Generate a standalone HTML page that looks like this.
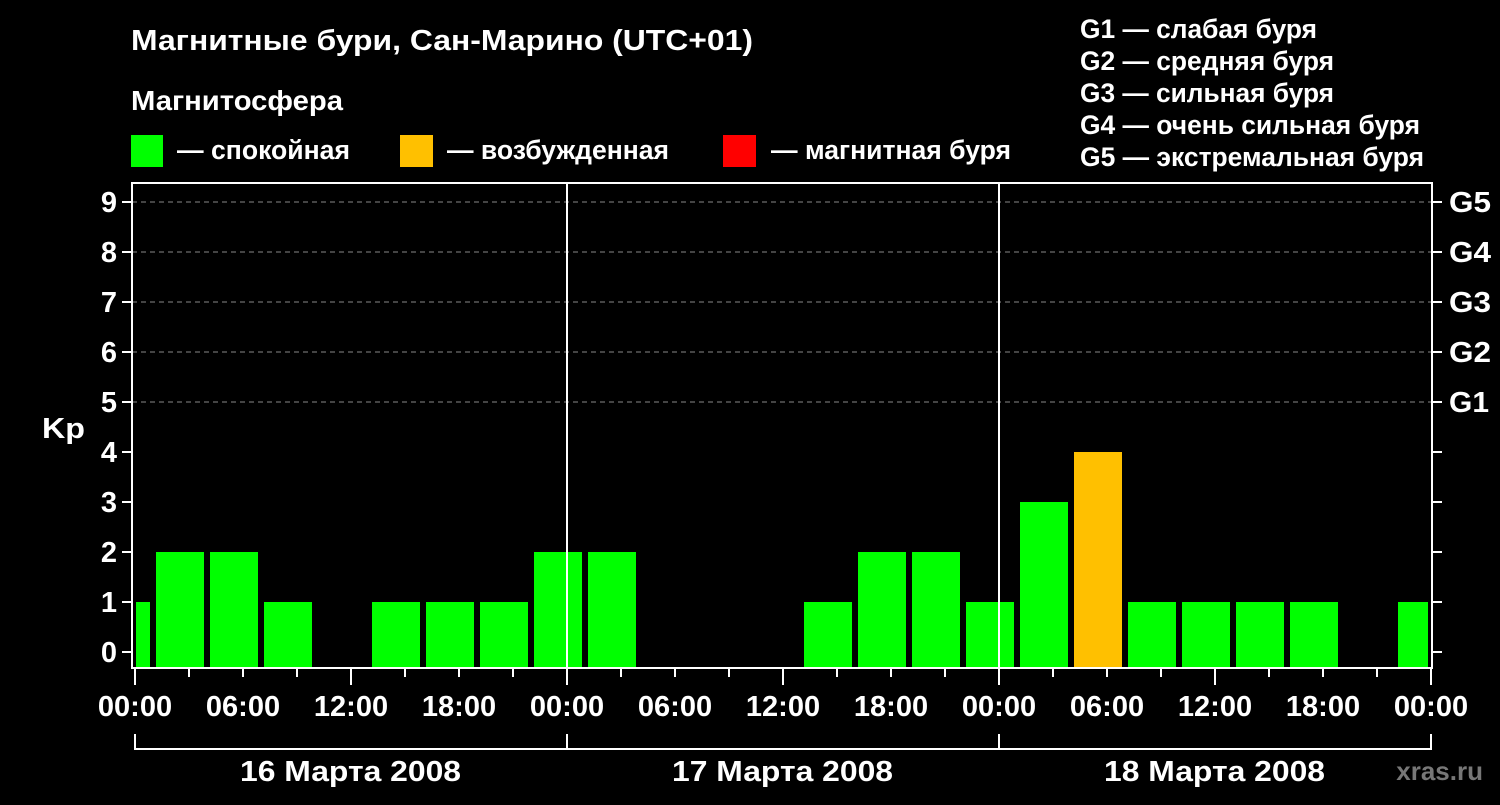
<!DOCTYPE html><html><head><meta charset="utf-8"><style>body{margin:0;background:#000;width:1500px;height:800px;overflow:hidden}</style></head><body>
<svg width="1500" height="800" xmlns="http://www.w3.org/2000/svg" font-family="Liberation Sans, sans-serif" font-weight="bold" fill="#fff">
<rect width="1500" height="800" fill="#000"/>
<text x="131" y="50" font-size="29" textLength="622" lengthAdjust="spacingAndGlyphs">Магнитные бури, Сан-Марино (UTC+01)</text>
<text x="131" y="110" font-size="28" textLength="212" lengthAdjust="spacingAndGlyphs">Магнитосфера</text>
<rect x="131" y="135" width="32" height="32" fill="#00ff00"/><text x="177" y="159" font-size="27" textLength="173" lengthAdjust="spacingAndGlyphs">— спокойная</text>
<rect x="400" y="135" width="33" height="32" fill="#ffc000"/><text x="447" y="159" font-size="27" textLength="222" lengthAdjust="spacingAndGlyphs">— возбужденная</text>
<rect x="723" y="135" width="33" height="32" fill="#ff0000"/><text x="771" y="159" font-size="27" textLength="240" lengthAdjust="spacingAndGlyphs">— магнитная буря</text>
<g font-size="27"><text x="1080" y="38" textLength="237" lengthAdjust="spacingAndGlyphs">G1 — слабая буря</text><text x="1080" y="70" textLength="254" lengthAdjust="spacingAndGlyphs">G2 — средняя буря</text><text x="1080" y="102" textLength="254" lengthAdjust="spacingAndGlyphs">G3 — сильная буря</text><text x="1080" y="134" textLength="340" lengthAdjust="spacingAndGlyphs">G4 — очень сильная буря</text><text x="1080" y="166" textLength="344" lengthAdjust="spacingAndGlyphs">G5 — экстремальная буря</text></g>
<g stroke="#888" stroke-width="1" stroke-dasharray="5,4"><line x1="132" x2="1432" y1="202" y2="202"/><line x1="132" x2="1432" y1="252" y2="252"/><line x1="132" x2="1432" y1="302" y2="302"/><line x1="132" x2="1432" y1="352" y2="352"/><line x1="132" x2="1432" y1="402" y2="402"/></g>
<g fill="#00ff00">
<rect x="136" y="602" width="14" height="66"/>
<rect x="156" y="552" width="48" height="116"/><rect x="210" y="552" width="48" height="116"/><rect x="264" y="602" width="48" height="66"/>
<rect x="372" y="602" width="48" height="66"/><rect x="426" y="602" width="48" height="66"/><rect x="480" y="602" width="48" height="66"/>
<rect x="534" y="552" width="48" height="116"/><rect x="588" y="552" width="48" height="116"/>
<rect x="804" y="602" width="48" height="66"/><rect x="858" y="552" width="48" height="116"/><rect x="912" y="552" width="48" height="116"/><rect x="966" y="602" width="48" height="66"/>
<rect x="1020" y="502" width="48" height="166"/>
<rect x="1128" y="602" width="48" height="66"/><rect x="1182" y="602" width="48" height="66"/><rect x="1236" y="602" width="48" height="66"/><rect x="1290" y="602" width="48" height="66"/>
<rect x="1398" y="602" width="30" height="66"/>
</g>
<rect x="1074" y="452" width="48" height="216" fill="#ffc000"/>
<g stroke="#fff" stroke-width="2" fill="none">
<rect x="132" y="183" width="1300" height="485"/>
<line x1="567" y1="183" x2="567" y2="668"/><line x1="999" y1="183" x2="999" y2="668"/>
<path d="M122 652H132M122 602H132M122 552H132M122 502H132M122 452H132M122 402H132M122 352H132M122 302H132M122 252H132M122 202H132"/>
<path d="M1432 652H1442M1432 602H1442M1432 552H1442M1432 502H1442M1432 452H1442M1432 402H1442M1432 352H1442M1432 302H1442M1432 252H1442M1432 202H1442"/>
<path d="M135 668V685M189 668V677M243 668V677M297 668V677M351 668V685M405 668V677M459 668V677M513 668V677M567 668V685M621 668V677M675 668V677M729 668V677M783 668V685M837 668V677M891 668V677M945 668V677M999 668V685M1053 668V677M1107 668V677M1161 668V677M1215 668V685M1269 668V677M1323 668V677M1377 668V677M1431 668V685"/>
<path d="M135 734V749H1431V734M567 734V749M999 734V749"/>
</g>
<g font-size="29" text-anchor="end"><text x="117" y="662">0</text><text x="117" y="612">1</text><text x="117" y="562">2</text><text x="117" y="512">3</text><text x="117" y="462">4</text><text x="117" y="412">5</text><text x="117" y="362">6</text><text x="117" y="312">7</text><text x="117" y="262">8</text><text x="117" y="212">9</text></g>
<text x="42" y="438" font-size="29" textLength="43" lengthAdjust="spacingAndGlyphs">Kp</text>
<g font-size="29"><text x="1449" y="212" textLength="42" lengthAdjust="spacingAndGlyphs">G5</text><text x="1449" y="262" textLength="42" lengthAdjust="spacingAndGlyphs">G4</text><text x="1449" y="312" textLength="42" lengthAdjust="spacingAndGlyphs">G3</text><text x="1449" y="362" textLength="42" lengthAdjust="spacingAndGlyphs">G2</text><text x="1449" y="412" textLength="40" lengthAdjust="spacingAndGlyphs">G1</text></g>
<g font-size="29" text-anchor="middle"><text x="135" y="716">00:00</text><text x="243" y="716">06:00</text><text x="351" y="716">12:00</text><text x="459" y="716">18:00</text><text x="567" y="716">00:00</text><text x="675" y="716">06:00</text><text x="783" y="716">12:00</text><text x="891" y="716">18:00</text><text x="999" y="716">00:00</text><text x="1107" y="716">06:00</text><text x="1215" y="716">12:00</text><text x="1323" y="716">18:00</text><text x="1431" y="716">00:00</text></g>
<g font-size="29"><text x="240" y="781" textLength="221" lengthAdjust="spacingAndGlyphs">16 Марта 2008</text><text x="672" y="781" textLength="221" lengthAdjust="spacingAndGlyphs">17 Марта 2008</text><text x="1104" y="781" textLength="221" lengthAdjust="spacingAndGlyphs">18 Марта 2008</text></g>
<text x="1483" y="780" font-size="26" text-anchor="end" fill="#777">xras.ru</text>
</svg></body></html>
